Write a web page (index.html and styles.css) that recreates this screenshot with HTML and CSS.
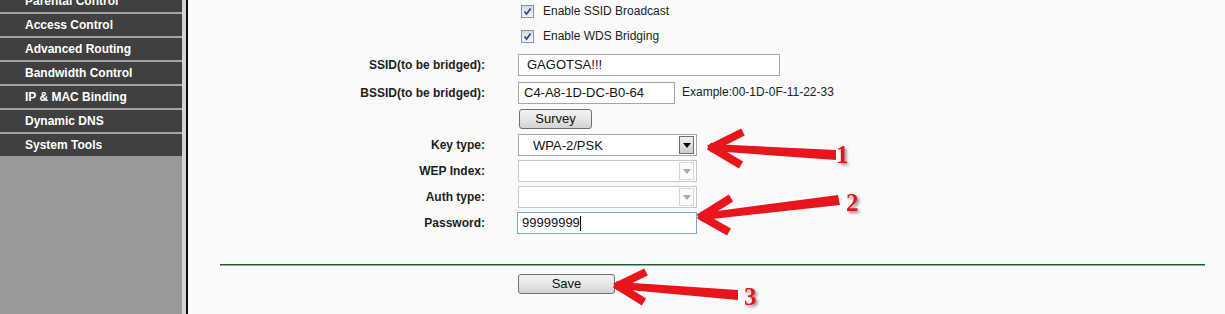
FILE: index.html
```html
<!DOCTYPE html>
<html>
<head>
<meta charset="utf-8">
<link rel="stylesheet" href="styles.css">
</head>
<body>
<div class="page">
  <nav class="sidebar">
    <ul class="menu">
      <li>Parental Control</li>
      <li>Access Control</li>
      <li>Advanced Routing</li>
      <li>Bandwidth Control</li>
      <li>IP &amp; MAC Binding</li>
      <li>Dynamic DNS</li>
      <li>System Tools</li>
    </ul>
  </nav>
  <div class="edge"></div>
  <div class="rule"></div>
  <main class="main">
    <div class="form">
      <div class="label r1"></div>
      <div class="value r1"><span class="cb"><svg width="9" height="9" viewBox="0 0 9 9"><path d="M1.5 4.5 L3.6 7 L7.6 1.5" fill="none" stroke="#2c4a8a" stroke-width="1.7"/></svg></span><span class="cbtext">Enable SSID Broadcast</span></div>

      <div class="label r2"></div>
      <div class="value r2"><span class="cb"><svg width="9" height="9" viewBox="0 0 9 9"><path d="M1.5 4.5 L3.6 7 L7.6 1.5" fill="none" stroke="#2c4a8a" stroke-width="1.7"/></svg></span><span class="cbtext">Enable WDS Bridging</span></div>

      <div class="label r3">SSID(to be bridged):</div>
      <div class="value r3"><div class="input ssid">GAGOTSA!!!</div></div>

      <div class="label r4">BSSID(to be bridged):</div>
      <div class="value r4"><div class="input bssid">C4-A8-1D-DC-B0-64</div><span class="example">Example:00-1D-0F-11-22-33</span></div>

      <div class="label r5"></div>
      <div class="value r5"><div class="btn survey">Survey</div></div>

      <div class="label r6">Key type:</div>
      <div class="value r6"><div class="select"><span class="seltext">WPA-2/PSK</span><span class="arrowbox"><svg width="8" height="5" viewBox="0 0 8 5"><path d="M0 0 H8 L4 5 Z" fill="#000"/></svg></span></div></div>

      <div class="label r7">WEP Index:</div>
      <div class="value r7"><div class="select disabled"><span class="seltext"></span><span class="arrowbox"><svg width="8" height="5" viewBox="0 0 8 5"><path d="M0 0 H8 L4 5 Z" fill="#a8a8a8"/></svg></span></div></div>

      <div class="label r8">Auth type:</div>
      <div class="value r8"><div class="select disabled"><span class="seltext"></span><span class="arrowbox"><svg width="8" height="5" viewBox="0 0 8 5"><path d="M0 0 H8 L4 5 Z" fill="#a8a8a8"/></svg></span></div></div>

      <div class="label r9">Password:</div>
      <div class="value r9"><div class="input pass focus">99999999<span class="caret"></span></div></div>
    </div>
    <div class="hr"></div>
    <div class="actions"><div class="btn save">Save</div></div>
  </main>

  <svg class="annot" width="1225" height="314" viewBox="0 0 1225 314">
    <g stroke="#e8161c" fill="none" stroke-linecap="butt">
      <polygon points="712,144 836,150 836,160 712,151" fill="#e8161c" stroke="none"/>
      <line x1="709" y1="149" x2="743" y2="132" stroke-width="8"/>
      <line x1="709" y1="146" x2="741" y2="165" stroke-width="8"/>

      <polygon points="702,213 838,195 840,205 703,220" fill="#e8161c" stroke="none"/>
      <line x1="699" y1="218" x2="731" y2="198" stroke-width="8"/>
      <line x1="699" y1="215" x2="729" y2="232" stroke-width="8"/>

      <polygon points="618,282 738,290 738,300 618,289" fill="#e8161c" stroke="none"/>
      <line x1="615" y1="287" x2="646" y2="272" stroke-width="8"/>
      <line x1="615" y1="284" x2="644" y2="302" stroke-width="8"/>
    </g>
    <text class="num" x="836" y="163">1</text>
    <text class="num" x="846" y="211">2</text>
    <text class="num" x="744" y="305">3</text>
  </svg>
</div>
</body>
</html>
```

FILE: styles.css
```css
html, body {
  margin: 0;
  padding: 0;
}
body {
  background: #fafafa;
  font-family: "Liberation Sans", Arial, sans-serif;
  color: #222;
  width: 1225px;
  height: 314px;
  overflow: hidden;
}
.page {
  position: relative;
  display: flex;
  height: 314px;
}
.sidebar {
  width: 182px;
  flex: none;
  background: #999999;
  overflow: hidden;
}
.menu {
  list-style: none;
  margin: -10px 0 0 0;
  padding: 0;
}
.menu li {
  height: 22px;
  line-height: 22px;
  margin-bottom: 2px;
  background: #404040;
  color: #fff;
  font-weight: bold;
  font-size: 12px;
  padding-left: 25px;
  white-space: nowrap;
}
.menu li + li {
  box-shadow: 0 -2px 0 #a3a3a3;
}
.edge {
  width: 4px;
  flex: none;
  background: #d4d4d4;
}
.rule {
  width: 2px;
  flex: none;
  background: #0d0d0d;
}
.main {
  flex: 1;
  background: #fafafa;
}
.form {
  display: grid;
  grid-template-columns: 297px 1fr;
  column-gap: 33px;
  grid-template-rows: 22px 28px 29px 27px 26px 26px 26px 26px 26px;
}
.label {
  display: flex;
  align-items: center;
  justify-content: flex-end;
  font-size: 12px;
  font-weight: bold;
  color: #1e1e1e;
  white-space: nowrap;
}
.value {
  display: flex;
  align-items: center;
  font-size: 12px;
  white-space: nowrap;
}
.cb {
  width: 11px;
  height: 11px;
  margin-left: 3px;
  border: 1px solid #8a94a6;
  background: linear-gradient(#d6dbe3, #f6f7f9);
  display: flex;
  align-items: center;
  justify-content: center;
}
.cbtext {
  margin-left: 9px;
  font-size: 12px;
  color: #222;
}
.input {
  height: 20px;
  border: 1px solid #a6a6a6;
  background: #fff;
  font-size: 13px;
  line-height: 20px;
  padding-left: 5px;
  box-sizing: content-box;
  color: #111;
}
.ssid {
  width: 252px;
  padding-left: 8px;
}
.bssid {
  width: 150px;
}
.example {
  margin-left: 7px;
  font-size: 12px;
  color: #222;
  position: relative;
  top: -1px;
}
.btn {
  height: 18px;
  border: 1px solid #707070;
  border-radius: 3px;
  background: linear-gradient(#f4f4f4 0%, #e6e6e6 50%, #d2d2d2 100%);
  font-size: 13px;
  line-height: 18px;
  text-align: center;
  color: #111;
}
.survey {
  width: 71px;
  margin-left: 1px;
}
.select {
  width: 177px;
  height: 20px;
  border: 1px solid #a6a6a6;
  background: #fff;
  display: flex;
  align-items: center;
  justify-content: space-between;
}
.seltext {
  font-size: 13px;
  padding-left: 14px;
  color: #111;
}
.arrowbox {
  width: 13px;
  height: 16px;
  margin-right: 2px;
  border: 1px solid #6f6f6f;
  background: linear-gradient(#f0f0f0, #cfcfcf);
  display: flex;
  align-items: center;
  justify-content: center;
}
.select.disabled {
  border-color: #c8c8c8;
}
.select.disabled .arrowbox {
  border-color: #d6d6d6;
  background: #fafafa;
}
.pass {
  width: 174px;
  margin-left: -1px;
  border-color: #7aa7d6;
  padding-left: 4px;
  display: flex;
  align-items: center;
}
.caret {
  display: inline-block;
  width: 1px;
  height: 15px;
  background: #000;
}
.hr {
  margin: 28px 20px 0 32px;
  height: 1px;
  background: #1f5a36;
  border-bottom: 1px solid #8fae9a;
}
.actions {
  margin-top: 8px;
  padding-left: 330px;
}
.save {
  width: 95px;
}
.annot {
  position: absolute;
  left: 0;
  top: 0;
  pointer-events: none;
}
.num {
  font-family: "Liberation Serif", "Times New Roman", serif;
  font-weight: bold;
  font-size: 25px;
  fill: #e4141b;
  filter: drop-shadow(2px 2px 1.5px rgba(0,0,0,0.45));
}
```
